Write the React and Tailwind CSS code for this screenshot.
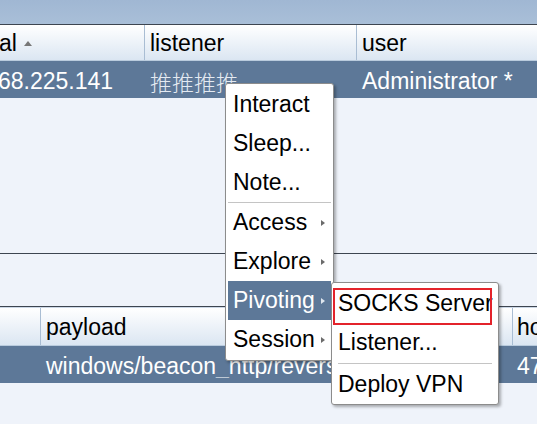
import React from "react";

const font = { fontFamily: '"Liberation Sans", Arial, "Noto Sans CJK SC", sans-serif' };

function Arrow({ light }) {
  return (
    <span
      className={`w-0 h-0 border-y-[3px] border-y-transparent border-l-[4px] ${
        light ? "border-l-[#dfe6ee]" : "border-l-[#6b6b6b]"
      }`}
    />
  );
}

function MenuItem({ label, sub, active }) {
  return (
    <div
      className={`h-[39px] flex items-center justify-between pl-[5px] pr-[6px] mx-[2px] ${
        active ? "bg-[#5d7898] text-white" : "text-black"
      }`}
    >
      <span>{label}</span>
      {sub && <Arrow light={active} />}
    </div>
  );
}

function HeaderCell({ w, children, last }) {
  return (
    <div
      className={`h-full flex items-center overflow-hidden whitespace-nowrap shrink-0 pt-[1px] ${
        last ? "flex-1" : "border-r border-[#a9bdd3]"
      } ${w}`}
    >
      {children}
    </div>
  );
}

export default function App() {
  return (
    <div
      className="relative w-[537px] h-[424px] overflow-hidden bg-[#eff3fa] text-[23px] leading-none"
      style={font}
    >
      {/* top strip */}
      <div className="h-[25px] bg-gradient-to-b from-[#a0b7d3] to-[#a9bfd8] border-b border-[#3d4550]" />

      {/* upper table header */}
      <div className="h-[36px] flex bg-gradient-to-b from-[#ffffff] to-[#dbe6f2] border-b border-[#b9cbdd]">
        <HeaderCell w="w-[145px]">
          <span className="ml-[-1px]">al</span>
          <span className="ml-[7px] w-0 h-0 border-x-[4px] border-x-transparent border-b-[5px] border-b-[#777]" />
        </HeaderCell>
        <HeaderCell w="w-[212px] pl-[5px]">listener</HeaderCell>
        <HeaderCell w="pl-[5px]" last>
          user
        </HeaderCell>
      </div>

      {/* upper selected row */}
      <div className="h-[37px] flex items-center pt-[3px] bg-[#5d7898] text-white whitespace-nowrap">
        <div className="w-[145px] shrink-0 overflow-hidden">
          <span className="ml-[-2px] block">68.225.141</span>
        </div>
        <div
          className="w-[212px] shrink-0 pl-[5px] text-[22px] text-[#e4eaf2]"
          style={{ fontFamily: '"Noto Sans CJK SC", sans-serif', fontWeight: 300 }}
        >
          推推推推
        </div>
        <div className="pl-[5px]">Administrator *</div>
      </div>

      {/* empty table area */}
      <div className="h-[156px] border-b border-[#3d4550]" />

      {/* splitter gap */}
      <div className="h-[53px] border-b border-[#3d4550]" />
      <div className="h-[1px] bg-[#cdd8e6]" />

      {/* lower table header */}
      <div className="h-[38px] flex bg-gradient-to-b from-[#ffffff] to-[#dbe6f2] border-b border-[#b9cbdd]">
        <HeaderCell w="w-[41px]" />
        <HeaderCell w="w-[472px] pl-[5px]">payload</HeaderCell>
        <HeaderCell w="pl-[4px]" last>
          ho
        </HeaderCell>
      </div>

      {/* lower selected row */}
      <div className="h-[37px] flex items-center pt-[3px] bg-[#5d7898] text-white whitespace-nowrap">
        <div className="w-[41px] shrink-0" />
        <div className="w-[472px] shrink-0 pl-[5px] overflow-hidden">windows/beacon_http/reverse_http</div>
        <div className="pl-[4px]">47</div>
      </div>

      {/* context menu */}
      <div className="absolute left-[225px] top-[83px] w-[109px] bg-white border border-[#8c8c8c] rounded-[3px] shadow-[2px_2px_3px_rgba(0,0,0,0.3)] py-[1px]">
        <MenuItem label="Interact" />
        <MenuItem label="Sleep..." />
        <MenuItem label="Note..." />
        <div className="h-[1px] bg-[#c4c4c4] mx-[2px]" />
        <MenuItem label="Access" sub />
        <MenuItem label="Explore" sub />
        <MenuItem label="Pivoting" sub active />
        <MenuItem label="Session" sub />
      </div>

      {/* submenu */}
      <div className="absolute left-[331px] top-[282px] w-[168px] bg-white border border-[#8c8c8c] rounded-[3px] shadow-[2px_2px_3px_rgba(0,0,0,0.3)] py-[1px]">
        <div className="relative h-[39px] flex items-center pl-[6px]">
          <span>SOCKS Server</span>
          <div className="absolute left-[1px] top-[4px] w-[159px] h-[37px] border-2 border-[#e3232b]" />
        </div>
        <div className="h-[39px] flex items-center pl-[6px]">Listener...</div>
        <div className="h-[1px] bg-[#c4c4c4] mx-[6px] my-[1px]" />
        <div className="h-[38px] flex items-center pl-[6px]">Deploy VPN</div>
      </div>
    </div>
  );
}
